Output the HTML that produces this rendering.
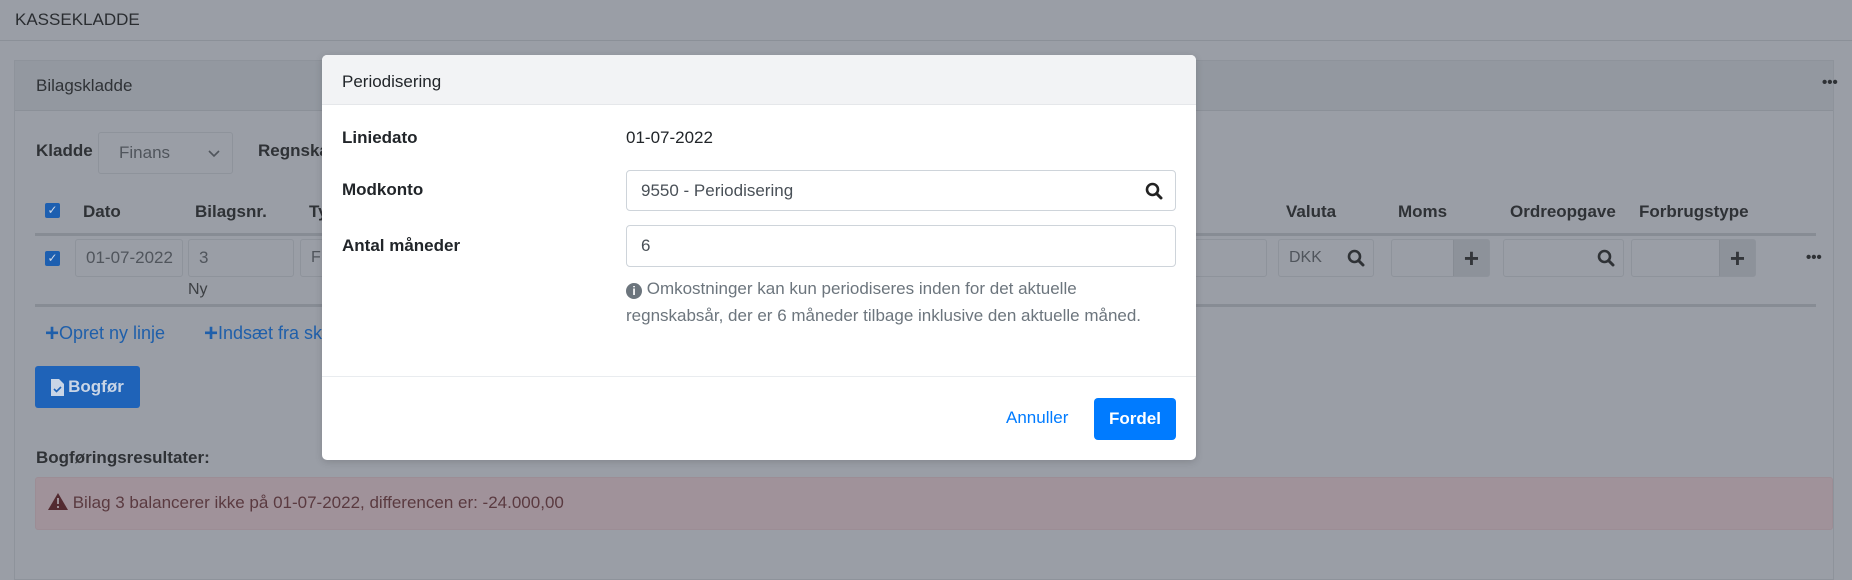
<!DOCTYPE html>
<html><head><meta charset="utf-8"><style>
*{box-sizing:border-box;margin:0;padding:0}
body{width:1852px;height:567px;overflow:hidden;background:#9a9ea6;font-family:"Liberation Sans",sans-serif;font-size:16px;color:#212529;position:relative}
.a{position:absolute;white-space:nowrap}
.b{font-weight:bold}
.inp{position:absolute;border:1px solid #8e939b;border-radius:3px;background:#9a9ea6;color:#50555c;padding-left:10px;display:flex;align-items:center}
.line{position:absolute;height:3px;background:#878c94}
.addon{position:absolute;top:0;right:0;bottom:0;width:36px;background:#8d929a;border-left:1px solid #878c94;display:flex;align-items:center;justify-content:center;font-size:26px;font-weight:bold;color:#33363a}
.blue{color:#1f5faa}
.mag{position:absolute;right:8px;top:50%;margin-top:-9px}
</style></head><body>
<svg width="0" height="0" style="position:absolute"><defs><symbol id="m" viewBox="0 0 18 18"><circle cx="7.5" cy="7.5" r="5.5" fill="none" stroke="currentColor" stroke-width="2.6"/><path d="M11.5 11.5L16 16" stroke="currentColor" stroke-width="3" stroke-linecap="round"/></symbol></defs></svg>
<div class="a" style="left:15px;top:10px;font-size:17px;color:#2a2d31">KASSEKLADDE</div>
<div class="a" style="left:0;top:40px;width:1852px;height:1px;background:#8b9098"></div>
<div class="a" style="left:14px;top:60px;width:1820px;height:520px;border:1px solid #8e939b;"></div>
<div class="a" style="left:15px;top:61px;width:1818px;height:50px;background:#9398a0;border-bottom:1px solid #8b9098"></div>
<div class="a" style="left:36px;top:76px;font-size:17px;color:#2f3236">Bilagskladde</div>
<div class="a b" style="left:1822px;top:74px;font-size:15px;color:#2f3236">•••</div>
<div class="a b" style="left:36px;top:141px;font-size:17px;color:#2f3236">Kladde</div>
<div class="inp" style="left:98px;top:132px;width:135px;height:42px;padding-left:20px;font-size:17px">Finans<svg style="position:absolute;right:12px;top:17px" width="12" height="8" viewBox="0 0 12 8"><path d="M1 1l5 5 5-5" fill="none" stroke="#50555c" stroke-width="1.6"/></svg></div>
<div class="a b" style="left:258px;top:141px;font-size:17px;color:#2f3236">Regnskab</div>
<div class="a" style="left:45px;top:203px;width:15px;height:15px;background:#1d5fb0;border-radius:2px;color:#cfd8e6;font-size:12px;line-height:15px;text-align:center">✓</div>
<div class="a b" style="left:83px;top:202px;font-size:17px;color:#2f3236">Dato</div>
<div class="a b" style="left:195px;top:202px;font-size:17px;color:#2f3236">Bilagsnr.</div>
<div class="a b" style="left:309px;top:202px;font-size:17px;color:#2f3236">Type</div>
<div class="a b" style="left:1286px;top:202px;font-size:17px;color:#2f3236">Valuta</div>
<div class="a b" style="left:1398px;top:202px;font-size:17px;color:#2f3236">Moms</div>
<div class="a b" style="left:1510px;top:202px;font-size:17px;color:#2f3236">Ordreopgave</div>
<div class="a b" style="left:1639px;top:202px;font-size:17px;color:#2f3236">Forbrugstype</div>
<div class="line" style="left:35px;top:233px;width:1781px"></div>
<div class="a" style="left:45px;top:251px;width:15px;height:15px;background:#1d5fb0;border-radius:2px;color:#cfd8e6;font-size:12px;line-height:15px;text-align:center">✓</div>
<div class="inp" style="left:75px;top:239px;width:108px;height:38px;font-size:17px">01-07-2022</div>
<div class="inp" style="left:188px;top:239px;width:106px;height:38px;font-size:17px">3</div>
<div class="inp" style="left:300px;top:239px;width:30px;height:38px">F</div>
<div class="inp" style="left:1190px;top:239px;width:77px;height:38px"></div>
<div class="inp" style="left:1278px;top:239px;width:96px;height:38px">DKK<svg class="mag" width="18" height="18" style="color:#2f3236"><use href="#m"/></svg></div>
<div class="inp" style="left:1391px;top:239px;width:99px;height:38px"><div class="addon">+</div></div>
<div class="inp" style="left:1503px;top:239px;width:121px;height:38px"><svg class="mag" width="18" height="18" style="color:#2f3236"><use href="#m"/></svg></div>
<div class="inp" style="left:1631px;top:239px;width:125px;height:38px"><div class="addon">+</div></div>
<div class="a b" style="left:1806px;top:249px;font-size:15px;color:#2f3236">•••</div>
<div class="a" style="left:188px;top:281px;color:#3d4044">Ny</div>
<div class="line" style="left:35px;top:304px;width:1781px"></div>
<div class="a blue" style="left:45px;top:320px;font-size:18px"><b style="font-size:24px;vertical-align:-2px">+</b>Opret ny linje</div>
<div class="a blue" style="left:204px;top:320px;font-size:18px"><b style="font-size:24px;vertical-align:-2px">+</b>Indsæt fra skabelon</div>
<div class="a b" style="left:35px;top:366px;width:105px;height:42px;background:#1f63b8;border-radius:3px;color:#c9d5e6;font-size:17px;display:flex;align-items:center;justify-content:center"><svg width="13" height="17" viewBox="0 0 13 17" style="margin-right:4px"><path d="M0 0h8l5 5v12H0z" fill="#c9d5e6"/><path d="M3 10l2.5 2.5L10 8" fill="none" stroke="#1f63b8" stroke-width="1.6"/></svg>Bogfør</div>
<div class="a b" style="left:36px;top:448px;font-size:17px;color:#2f3236">Bogføringsresultater:</div>
<div class="a" style="left:35px;top:477px;width:1798px;height:53px;background:#a0929a;border:1px solid #9c8d95;border-radius:3px"></div>
<div class="a" style="left:48px;top:493px;font-size:17px;color:#5a3a40"><svg width="20" height="17" viewBox="0 0 20 17" style="vertical-align:-2px"><path d="M10 0L20 17H0z" fill="#532a30"/><rect x="9" y="5" width="2" height="6" fill="#a0929a"/><rect x="9" y="13" width="2" height="2" fill="#a0929a"/></svg> Bilag 3 balancerer ikke på 01-07-2022, differencen er: -24.000,00</div>
<div class="a" style="left:322px;top:55px;width:874px;height:405px;background:#fff;border-radius:5px;overflow:hidden;box-shadow:0 2px 8px rgba(0,0,0,.15)">
 <div style="position:absolute;left:0;top:0;width:874px;height:50px;background:#f2f3f5;border-bottom:1px solid #e5e7ea"></div>
 <div class="a" style="left:20px;top:17px;font-size:17px">Periodisering</div>
 <div class="a b" style="left:20px;top:73px;font-size:17px">Liniedato</div>
 <div class="a" style="left:304px;top:73px;font-size:17px">01-07-2022</div>
 <div class="a b" style="left:20px;top:125px;font-size:17px">Modkonto</div>
 <div class="a" style="left:304px;top:115px;width:550px;height:41px;border:1px solid #ced4da;border-radius:4px;padding-left:14px;display:flex;align-items:center;color:#495057;font-size:17px">9550 - Periodisering<svg class="mag" width="18" height="18" style="color:#222;right:12px"><use href="#m"/></svg></div>
 <div class="a b" style="left:20px;top:181px;font-size:17px">Antal måneder</div>
 <div class="a" style="left:304px;top:170px;width:550px;height:42px;border:1px solid #ced4da;border-radius:4px;padding-left:14px;display:flex;align-items:center;color:#495057;font-size:17px">6</div>
 <div class="a" style="left:304px;top:220px;font-size:17px;color:#6c757d;line-height:27px;white-space:normal;width:540px"><span style="display:inline-block;width:16px;height:16px;border-radius:50%;background:#6c757d;color:#fff;font-size:12px;line-height:16px;text-align:center;font-weight:bold;vertical-align:-1px">i</span> Omkostninger kan kun periodiseres inden for det aktuelle<br>regnskabsår, der er 6 måneder tilbage inklusive den aktuelle måned.</div>
 <div style="position:absolute;left:0;top:321px;width:874px;height:1px;background:#e9ecef"></div>
 <div class="a" style="left:684px;top:353px;font-size:17px;color:#007bff">Annuller</div>
 <div class="a b" style="left:772px;top:343px;width:82px;height:42px;background:#007bff;border-radius:4px;color:#fff;font-size:17px;display:flex;align-items:center;justify-content:center">Fordel</div>
</div>
</body></html>
